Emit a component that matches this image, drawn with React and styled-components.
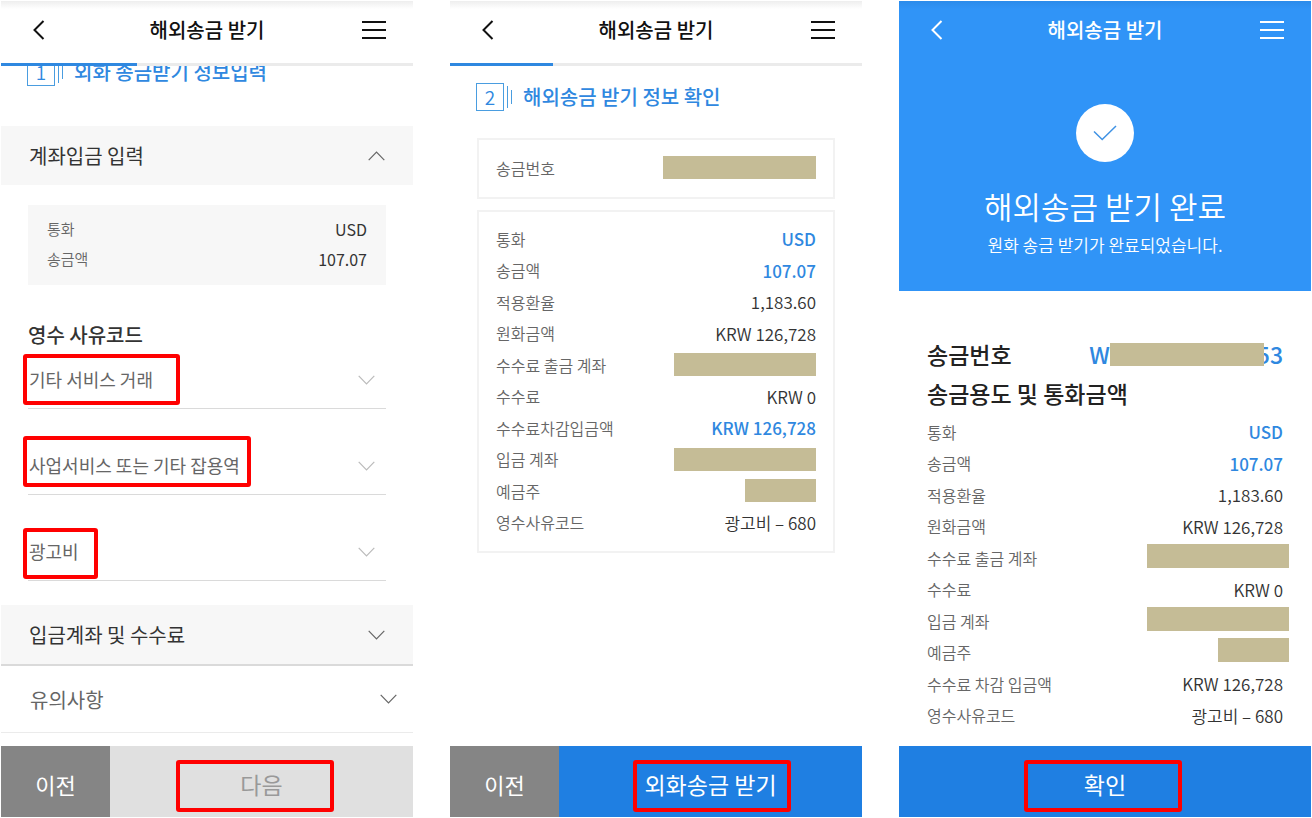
import React, { useState } from 'react'
import styled, { createGlobalStyle, css } from 'styled-components'

const COLOR = {
    main: '#2f88e0',
    hero: '#3094f7',
    button: '#1f7fe2',
    black: '#111111',
    text: '#333333',
    label: '#666666',
    gray1: '#f7f7f7',
    gray2: '#ebebeb',
    gray3: '#dadada',
    mask: '#c5bc96',
    mark: '#ff0000',
    white: '#ffffff',
}

const GlobalStyle = createGlobalStyle`
    * {
        box-sizing: border-box;
    }
    body {
        margin: 0;
        background-color: ${COLOR.white};
        font-family: "Noto Sans CJK KR", "Noto Sans", sans-serif;
        color: ${COLOR.text};
    }
    button, select {
        font: inherit;
        color: inherit;
        border: 0;
        padding: 0;
        background: none;
        cursor: pointer;
    }
    h1, h2, h3, p, dl, dd {
        margin: 0;
        font-weight: 400;
    }
`

const Page = styled.main`
    display: grid;
    grid-template-columns: repeat(3, minmax(0, 1fr));
    gap: 37px;
    min-height: 100vh;
    padding: 1px;
`
const Phone = styled.section`
    display: flex;
    flex-direction: column;
`

/* header */
const Header = styled.header`
    display: flex;
    align-items: center;
    justify-content: space-between;
    height: 62px;
    padding: 0 27px 4px;
    color: ${props => props.$light ? COLOR.white : COLOR.black};
    background: ${props => props.$light
        ? 'linear-gradient(#2b8bea, #3094f7 8px)'
        : 'linear-gradient(#eeeeee, #ffffff 8px)'};
`
const HeaderTitle = styled.h1`
    font-size: 20px;
    font-weight: 500;
    line-height: 30px;
`
const IconButton = styled.button`
    display: flex;
    align-items: center;
    width: 24px;
    height: 24px;
`
const Progress = styled.div`
    height: 3px;
    background-color: ${COLOR.gray2};
`
const ProgressBar = styled.div`
    width: ${props => props.$percent}%;
    height: 3px;
    background-color: ${COLOR.main};
`

/* body */
const Body = styled.div`
    flex: 1;
    overflow: hidden;
`
const StepRow = styled.div`
    display: flex;
    align-items: center;
    margin-top: ${props => props.$scrolled ? '-8px' : '17px'};
    margin-bottom: ${props => props.$scrolled ? '40px' : '27px'};
    padding: 0 26px;
    color: ${COLOR.main};
`
const StepNumber = styled.span`
    width: 28px;
    height: 28px;
    border: 1px solid #4a9de0;
    font-size: 19px;
    font-weight: 350;
    line-height: 26px;
    text-align: center;
`
const StepBar = styled.i`
    width: 1px;
    height: ${props => props.$height}px;
    margin-left: 3px;
    background-color: #4a9de0;
`
const StepTitle = styled.h2`
    margin-left: 11px;
    font-size: 20px;
    font-weight: 500;
    line-height: 28px;
`

const Accordion = styled.button`
    display: flex;
    align-items: center;
    justify-content: space-between;
    width: 100%;
    height: 59px;
    padding: 0 28px;
    background-color: ${COLOR.gray1};
    font-size: 20px;
    text-align: left;
    ${props => props.$line && css`
        height: 61px;
        border-bottom: 2px solid ${COLOR.gray3};
    `}
    ${props => props.$plain && css`
        height: 67px;
        padding: 0 16px 0 29px;
        background-color: ${COLOR.white};
        border-bottom: 1px solid ${COLOR.gray2};
        color: ${COLOR.label};
    `}
`
const Summary = styled.dl`
    margin: 20px 27px 0;
    padding: 9px 19px 11px;
    background-color: ${COLOR.gray1};
`
const SummaryRow = styled.div`
    display: flex;
    justify-content: space-between;
    font-size: 16px;
    font-weight: 350;
    line-height: 30px;
    dt {
        font-size: 15px;
        color: ${COLOR.label};
    }
`
const CodeForm = styled.div`
    padding: 35px 27px 24px;
`
const CodeTitle = styled.h3`
    margin-bottom: 2px;
    font-size: 20px;
    font-weight: 500;
    line-height: 30px;
`
const Field = styled.div`
    position: relative;
    display: flex;
    align-items: center;
    border-bottom: 1px solid ${COLOR.gray3};
    & + & {
        margin-top: 29px;
    }
    svg {
        position: absolute;
        right: 11px;
        pointer-events: none;
    }
`
const Select = styled.select`
    appearance: none;
    width: 100%;
    height: 56px;
    padding: 0 1px 2px;
    font-size: 18px;
    color: ${COLOR.label};
    outline: 0;
`

/* red frame drawn over the part to press */
const Mark = styled.span`
    position: absolute;
    top: ${props => props.$top};
    left: ${props => props.$left};
    width: ${props => props.$width}px;
    height: ${props => props.$height || 51}px;
    border: 4px solid ${COLOR.mark};
    border-radius: 3px;
    pointer-events: none;
`

/* details */
const Card = styled.div`
    padding: 11px 17px 13px;
    margin: 0 27px 11px;
    border: 2px solid #f2f2f2;
    ${props => props.$single && 'padding: 12px 17px 14px;'}
`
const Details = styled.dl``
const DetailRow = styled.div`
    display: flex;
    align-items: center;
    justify-content: space-between;
    height: 31px;
    &:nth-child(even) {
        height: 32px;
    }
    dt {
        font-size: 16px;
        font-weight: 350;
        color: ${COLOR.label};
    }
    dd {
        font-size: 17px;
        font-weight: ${props => props.$strong ? 500 : 350};
        color: ${props => props.$strong ? COLOR.main : COLOR.text};
    }
`
const Mask = styled.span`
    display: block;
    width: ${props => props.$width}px;
    height: 23px;
    background-color: ${COLOR.mask};
`
const Result = styled.div`
    flex: 1;
    padding: 44px 28px 0;
    ${Details} {
        margin-top: 3px;
    }
    ${Details} ${Mask} {
        height: 24px;
        margin-right: -6px;
        margin-bottom: 4px;
    }
`
const ResultTitle = styled.h3`
    display: flex;
    align-items: center;
    justify-content: space-between;
    font-size: 23px;
    font-weight: 500;
    line-height: 39px;
    color: #222222;
`
const ResultNumber = styled.span`
    display: flex;
    align-items: center;
    color: ${COLOR.main};
    ${Mask} {
        position: relative;
        margin-right: -7px;
    }
`

/* complete */
const Hero = styled.div`
    height: 290px;
    background-color: ${COLOR.hero};
    color: ${COLOR.white};
    text-align: center;
`
const Circle = styled.div`
    display: flex;
    align-items: center;
    justify-content: center;
    width: 58px;
    height: 58px;
    margin: 41px auto 0;
    border-radius: 50%;
    background-color: ${COLOR.white};
`
const HeroTitle = styled.h2`
    margin-top: 20px;
    font-size: 31px;
    font-weight: 350;
    line-height: 48px;
`
const HeroText = styled.p`
    font-size: 17px;
    font-weight: 350;
    line-height: 30px;
`

/* footer */
const Footer = styled.footer`
    display: flex;
    height: 71px;
`
const FooterButton = styled.button`
    position: relative;
    padding-top: 4px;
    color: ${COLOR.white};
    font-size: 22px;
`
const PrevButton = styled(FooterButton)`
    width: 109px;
    background-color: #858585;
`
const NextButton = styled(FooterButton)`
    flex: 1;
    background-color: ${COLOR.button};
    font-size: 23px;
    &:disabled {
        background-color: #e0e0e0;
        color: #999999;
    }
`

const DETAILS = [
    { label: '통화', value: 'USD', strong: true },
    { label: '송금액', value: '107.07', strong: true },
    { label: '적용환율', value: '1,183.60' },
    { label: '원화금액', value: 'KRW 126,728' },
    { label: '수수료 출금 계좌', mask: 142 },
    { label: '수수료', value: 'KRW 0' },
]

const CONFIRM = [
    ...DETAILS,
    { label: '수수료차감입금액', value: 'KRW 126,728', strong: true },
    { label: '입금 계좌', mask: 142 },
    { label: '예금주', mask: 71 },
    { label: '영수사유코드', value: '광고비 – 680' },
]

const COMPLETE = [
    ...DETAILS,
    { label: '입금 계좌', mask: 142 },
    { label: '예금주', mask: 71 },
    { label: '수수료 차감 입금액', value: 'KRW 126,728' },
    { label: '영수사유코드', value: '광고비 – 680' },
]

const FIELDS = [
    { value: '기타 서비스 거래', top: '2px', width: 157 },
    { value: '사업서비스 또는 기타 잡용역', top: '-2px', width: 228 },
    { value: '광고비', top: '4px', width: 75 },
]

function Chevron ({ up, color }) {
    return (
        <svg width="17" height="10" viewBox="0 0 17 10" fill="none" stroke={color} strokeWidth="1.2">
            <path d={up ? 'M0.7 9.2 8.5 1.2 16.3 9.2' : 'M0.7 0.8 8.5 8.8 16.3 0.8'}/>
        </svg>
    )
}

function TopBar ({ light }) {
    return (
        <Header $light={light}>
            <IconButton aria-label="뒤로">
                <svg width="18" height="20" viewBox="0 0 18 20" fill="none" stroke="currentColor" strokeWidth="2">
                    <path d="M15.5 1 6.5 10 15.5 19"/>
                </svg>
            </IconButton>
            <HeaderTitle>해외송금 받기</HeaderTitle>
            <IconButton aria-label="메뉴">
                <svg width="24" height="20" viewBox="0 0 24 20" fill="none" stroke="currentColor" strokeWidth="2">
                    <path d="M0 2H24M0 10H24M0 18H24"/>
                </svg>
            </IconButton>
        </Header>
    )
}

function Step ({ number, title, scrolled }) {
    return (
        <StepRow $scrolled={scrolled}>
            <StepNumber>{number}</StepNumber>
            <StepBar $height={22}/>
            <StepBar $height={14}/>
            <StepTitle>{title}</StepTitle>
        </StepRow>
    )
}

function DetailList ({ rows }) {
    return (
        <Details>
            {rows.map(row => (
                <DetailRow key={row.label} $strong={row.strong}>
                    <dt>{row.label}</dt>
                    <dd>{row.mask ? <Mask $width={row.mask}/> : row.value}</dd>
                </DetailRow>
            ))}
        </Details>
    )
}

function CodeField ({ field }) {
    const [value, setValue] = useState(field.value)
    return (
        <Field>
            <Select aria-labelledby="code-title" value={value} onChange={e => setValue(e.target.value)}>
                {FIELDS.map(({ value }) => <option key={value}>{value}</option>)}
            </Select>
            <Chevron color="#bbbbbb"/>
            <Mark $top={field.top} $left="-5px" $width={field.width}/>
        </Field>
    )
}

function InputScreen () {
    return (
        <Phone>
            <TopBar/>
            <Progress><ProgressBar $percent={33}/></Progress>
            <Body>
                <Step number={1} title="외화 송금받기 정보입력" scrolled/>
                <Accordion>계좌입금 입력<Chevron up color="#666666"/></Accordion>
                <Summary>
                    <SummaryRow><dt>통화</dt><dd>USD</dd></SummaryRow>
                    <SummaryRow><dt>송금액</dt><dd>107.07</dd></SummaryRow>
                </Summary>
                <CodeForm>
                    <CodeTitle id="code-title">영수 사유코드</CodeTitle>
                    {FIELDS.map(field => <CodeField key={field.value} field={field}/>)}
                </CodeForm>
                <Accordion $line>입금계좌 및 수수료<Chevron color="#666666"/></Accordion>
                <Accordion $plain>유의사항<Chevron color="#666666"/></Accordion>
            </Body>
            <Footer>
                <PrevButton>이전</PrevButton>
                <NextButton disabled>
                    다음
                    <Mark $top="14px" $left="calc(50% - 86px)" $width={158} $height={52}/>
                </NextButton>
            </Footer>
        </Phone>
    )
}

function ConfirmScreen () {
    return (
        <Phone>
            <TopBar/>
            <Progress><ProgressBar $percent={25}/></Progress>
            <Body>
                <Step number={2} title="해외송금 받기 정보 확인"/>
                <Card $single>
                    <DetailList rows={[{ label: '송금번호', mask: 153 }]}/>
                </Card>
                <Card>
                    <DetailList rows={CONFIRM}/>
                </Card>
            </Body>
            <Footer>
                <PrevButton>이전</PrevButton>
                <NextButton>
                    외화송금 받기
                    <Mark $top="14px" $left="calc(50% - 78px)" $width={158} $height={52}/>
                </NextButton>
            </Footer>
        </Phone>
    )
}

function CompleteScreen () {
    return (
        <Phone>
            <Hero>
                <TopBar light/>
                <Circle>
                    <svg width="24" height="16" viewBox="0 0 24 16" fill="none" stroke="#3f92e4" strokeWidth="1.5">
                        <path d="M1 6.5 9.2 14.5 23 1"/>
                    </svg>
                </Circle>
                <HeroTitle>해외송금 받기 완료</HeroTitle>
                <HeroText>원화 송금 받기가 완료되었습니다.</HeroText>
            </Hero>
            <Result>
                <ResultTitle>
                    송금번호
                    <ResultNumber>W<Mask $width={154}/>53</ResultNumber>
                </ResultTitle>
                <ResultTitle>송금용도 및 통화금액</ResultTitle>
                <DetailList rows={COMPLETE}/>
            </Result>
            <Footer>
                <NextButton>
                    확인
                    <Mark $top="14px" $left="calc(50% - 81px)" $width={158} $height={52}/>
                </NextButton>
            </Footer>
        </Phone>
    )
}

function App () {
    return (
        <>
            <GlobalStyle/>
            <Page>
                <InputScreen/>
                <ConfirmScreen/>
                <CompleteScreen/>
            </Page>
        </>
    )
}

export default App
